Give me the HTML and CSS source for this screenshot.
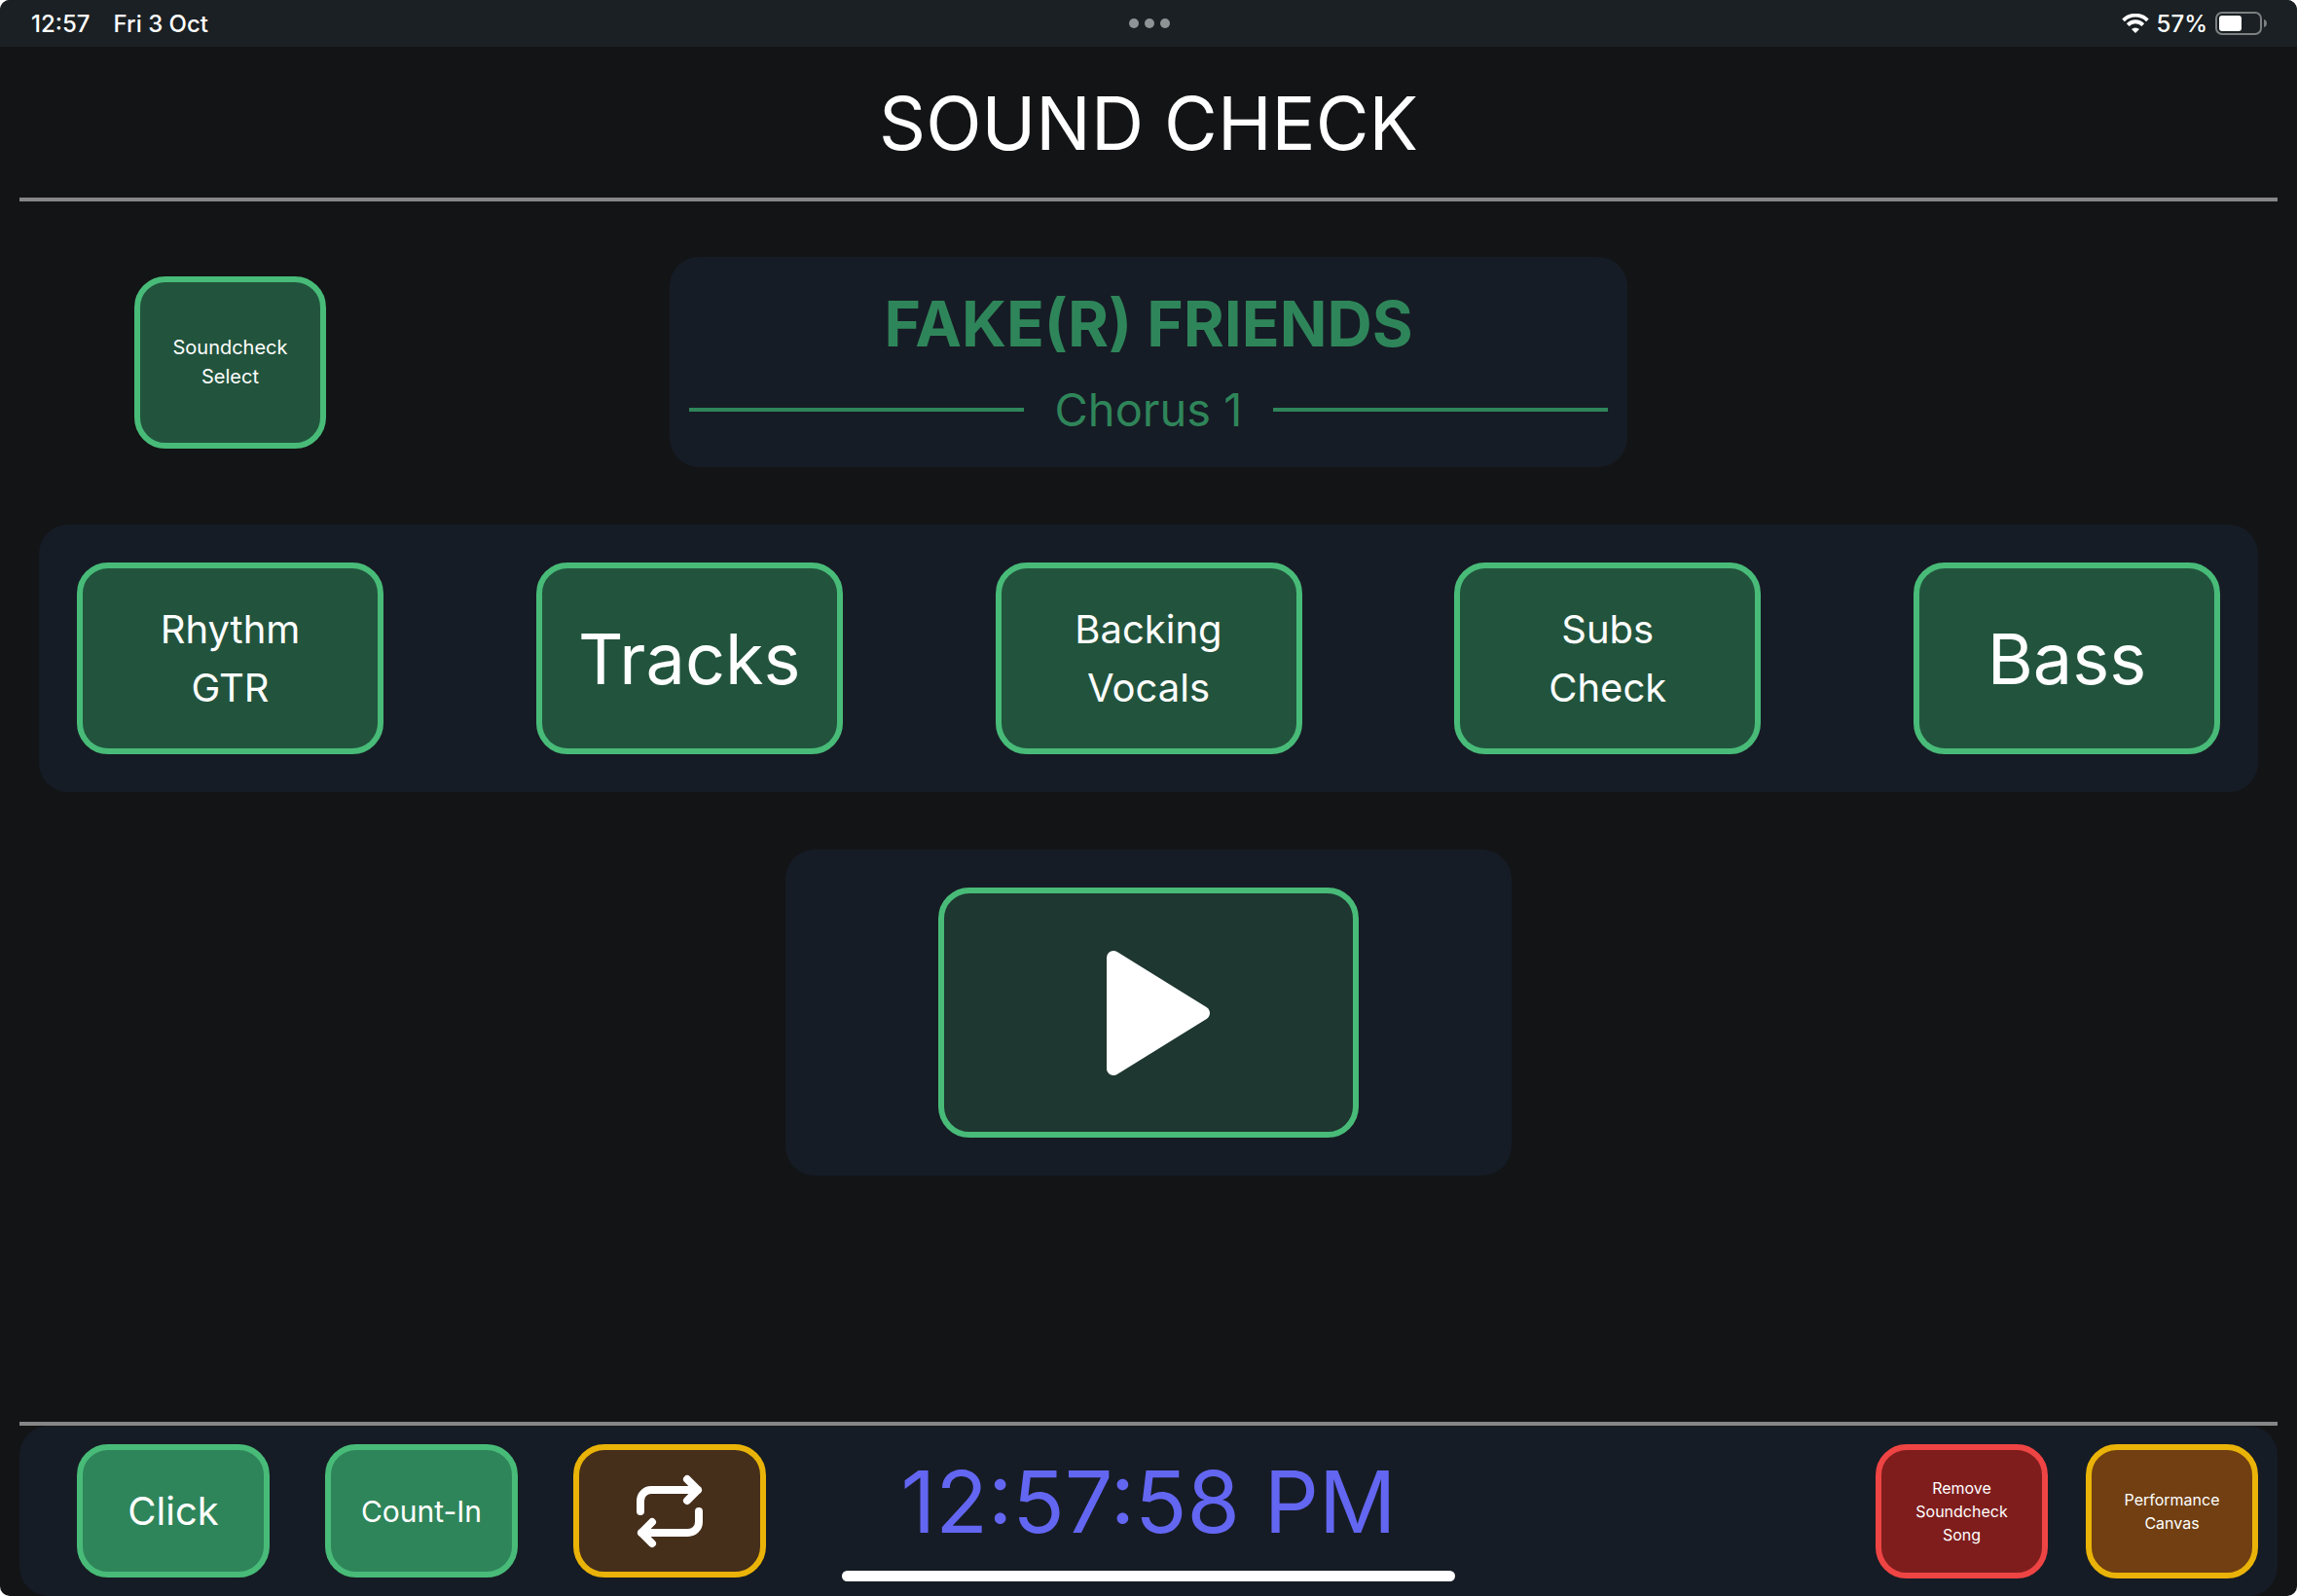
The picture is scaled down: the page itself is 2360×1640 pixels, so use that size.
FILE: index.html
```html
<!DOCTYPE html>
<html lang="en">

<head>
  <meta charset="UTF-8">
  <meta name="viewport" content="width=device-width, initial-scale=1.0">
  <title>Sound Check</title>
  <link rel="stylesheet" href="styles.css">
</head>

<body>
  <div class="screen">
    <div class="status-bar">
      <div class="status-left">
        <span>12:57</span>
        <span>Fri 3 Oct</span>
      </div>
      <div class="dots"><i></i><i></i><i></i></div>
      <div class="status-right">
        <svg class="wifi" viewBox="0 0 28 20" width="28" height="20">
          <path d="M1.6 6.8 A17.5 17.5 0 0 1 26.4 6.8" fill="none" stroke="#fff" stroke-width="3.8"/>
          <path d="M6.2 11.6 A10.8 10.8 0 0 1 21.8 11.6" fill="none" stroke="#fff" stroke-width="3.8"/>
          <path d="M14 20 L10 16 A5.8 5.8 0 0 1 18 16 Z" fill="#fff"/>
        </svg>
        <span>57%</span>
        <svg class="battery" viewBox="0 0 54 24" width="54" height="24">
          <rect x="1" y="1" width="46" height="22" rx="6" fill="none" stroke="#7c8081" stroke-width="2"/>
          <rect x="4" y="4" width="23" height="16" rx="3" fill="#fff"/>
          <path d="M50 8 C54 9 54 15 50 16 Z" fill="#7c8081"/>
        </svg>
      </div>
    </div>

    <header class="header">
      <h1>SOUND CHECK</h1>
    </header>

    <main>
      <div class="song-row">
        <button class="btn btn-green small-btn">Soundcheck<br>Select</button>
        <section class="panel song">
          <h2>FAKE(R) FRIENDS</h2>
          <div class="section-name"><span>Chorus 1</span></div>
        </section>
      </div>

      <div class="panel stems">
        <button class="btn btn-green">Rhythm<br>GTR</button>
        <button class="btn btn-green big">Tracks</button>
        <button class="btn btn-green">Backing<br>Vocals</button>
        <button class="btn btn-green">Subs<br>Check</button>
        <button class="btn btn-green big">Bass</button>
      </div>

      <div class="panel transport">
        <button class="btn btn-play" aria-label="Play">
          <svg viewBox="0 0 106 128" width="106" height="128">
            <path d="M7 7 L99 64 L7 121 Z" fill="#fff" stroke="#fff" stroke-width="14" stroke-linejoin="round"/>
          </svg>
        </button>
      </div>
    </main>

    <footer class="footer">
      <div class="panel controls">
        <div class="controls-left">
          <button class="btn btn-on">Click</button>
          <button class="btn btn-on medium">Count-In</button>
          <button class="btn btn-loop" aria-label="Loop">
            <svg viewBox="0 0 68 76" width="68" height="76" fill="none" stroke="#fff" stroke-width="8" stroke-linecap="round" stroke-linejoin="round">
              <path d="M4 38 V27 A11 11 0 0 1 15 16 H63 M52 5 L63 16 L52 27"/>
              <path d="M64 38 V49 A11 11 0 0 1 53 60 H5 M16 49 L5 60 L16 71"/>
            </svg>
          </button>
        </div>
        <time class="clock">12:57:58 PM</time>
        <div class="controls-right">
          <button class="btn btn-red">Remove<br>Soundcheck<br>Song</button>
          <button class="btn btn-amber">Performance<br>Canvas</button>
        </div>
      </div>
    </footer>
    <div class="home-indicator"></div>
  </div>
</body>

</html>
```
FILE: styles.css
```css
* {
  box-sizing: border-box;
}

body {
  margin: 0;
  background: #fff;
  color: #fff;
  font-family: Inter, "Liberation Sans", sans-serif;
}

h1,
h2 {
  margin: 0;
}

.screen {
  position: relative;
  display: flex;
  flex-direction: column;
  min-height: 100vh;
  background: #131416;
  border-radius: 10px;
  overflow: hidden;
}

/* status bar */
.status-bar {
  display: grid;
  grid-template-columns: 1fr auto 1fr;
  align-items: center;
  height: 48px;
  padding: 0 30px 0 32px;
  background: #1a2023;
  font-size: 24px;
  font-weight: 500;
}

.status-left {
  display: flex;
  gap: 24px;
}

.status-right {
  display: flex;
  align-items: center;
  justify-content: flex-end;
  gap: 8px;
}

.dots {
  display: flex;
  gap: 6px;
}

.dots i {
  width: 10px;
  height: 10px;
  border-radius: 50%;
  background: #8e9496;
}

/* title */
.header {
  margin: 0 20px;
  padding: 33px 0 31px;
  border-bottom: 4px solid #868686;
  text-align: center;
}

.header h1 {
  font-size: 75px;
  font-weight: 400;
  line-height: 91px;
}

main {
  flex: 1;
  display: flex;
  flex-direction: column;
  gap: 59px;
  padding: 57px 40px;
}

.panel {
  border-radius: 30px;
  background: #161c25;
}

.btn {
  display: flex;
  align-items: center;
  justify-content: center;
  padding: 0;
  border: 6px solid #48bb78;
  border-radius: 32px;
  color: #fff;
  font-family: inherit;
  font-size: 40px;
  line-height: 60px;
  text-align: center;
}

.btn-green {
  background: #22543d;
}

.btn-play {
  background: #1e3730;
}

.btn-on {
  background: #2f855a;
}

.btn-loop {
  border-color: #eab308;
  background: #452f1b;
}

.btn-red {
  border-color: #ef4444;
  background: #7f1d1d;
}

.btn-amber {
  border-color: #eab308;
  background: #713f12;
}

/* current song */
.song-row {
  display: grid;
  grid-template-columns: 1fr 984px 1fr;
  align-items: center;
}

.small-btn {
  width: 197px;
  height: 177px;
  margin-left: 98px;
  font-size: 20px;
  line-height: 30px;
}

.song {
  height: 216px;
  padding: 20px;
  color: #2f855a;
  text-align: center;
}

.song h2 {
  font-size: 64px;
  font-weight: 700;
  line-height: 98px;
}

.section-name {
  display: flex;
  align-items: center;
  gap: 32px;
  font-size: 47px;
  line-height: 78px;
}

.section-name::before,
.section-name::after {
  content: "";
  flex: 1;
  height: 4px;
  background: #2f855a;
}

/* instrument buttons */
.stems {
  display: flex;
  justify-content: space-between;
  padding: 39px;
}

.stems .btn {
  width: 315px;
  height: 197px;
}

.stems .big {
  font-size: 72px;
}

/* play */
.transport {
  align-self: center;
  display: flex;
  justify-content: center;
  width: 746px;
  padding: 39px;
}

.btn-play {
  width: 432px;
  height: 257px;
  padding-left: 20px;
}

/* bottom bar */
.footer {
  margin: 0 20px;
  border-top: 4px solid #868686;
}

.controls {
  display: grid;
  grid-template-columns: 1fr auto 1fr;
  align-items: center;
  height: 175px;
  padding: 0 20px;
}

.controls-left {
  display: flex;
  gap: 57px;
  padding-left: 39px;
}

.controls-left .btn {
  width: 198px;
  height: 137px;
}

.controls-left .medium {
  font-size: 30px;
}

.clock {
  padding-bottom: 20px;
  color: #6366f1;
  font-size: 88px;
  line-height: 106px;
}

.controls-right {
  display: flex;
  justify-content: flex-end;
  gap: 39px;
}

.controls-right .btn {
  width: 177px;
  height: 138px;
  font-size: 16px;
  line-height: 24px;
}

/* system home bar floats over the controls */
.home-indicator {
  position: absolute;
  bottom: 15px;
  left: 50%;
  width: 630px;
  height: 11px;
  border-radius: 6px;
  background: #fff;
  transform: translateX(-50%);
}
```
